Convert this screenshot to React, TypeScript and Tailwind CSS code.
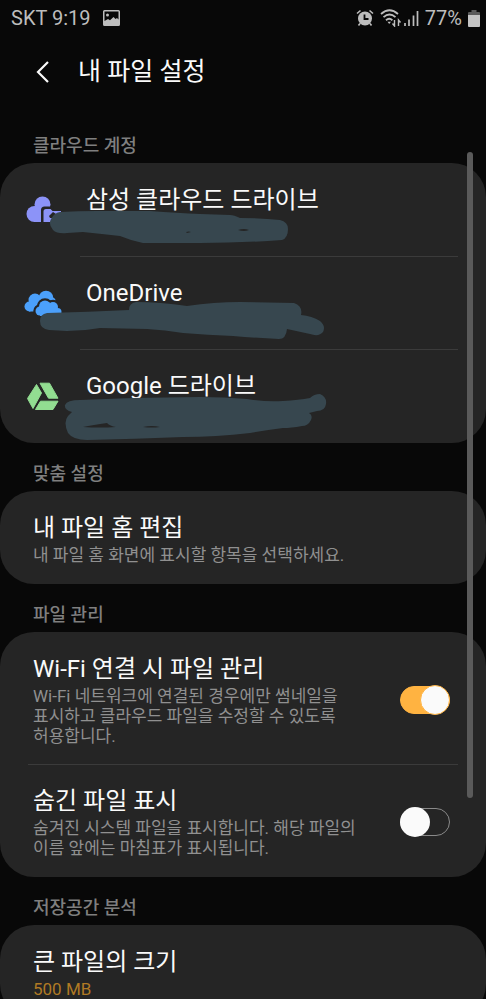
import type React from "react"
import { useState } from "react"

interface AccountRowProps {
  title: string
  icon: React.ReactNode
  scribble: React.ReactNode
}

interface ToggleRowProps {
  id: string
  title: string
  description: string
  checked: boolean
  onChange: (checked: boolean) => void
}

function SamsungCloudIcon() {
  return (
    <svg viewBox="0 0 38 38" className="h-[38px] w-[38px]" aria-hidden="true">
      <g fill="#8c93f8">
        <circle cx="18.5" cy="13.5" r="8" />
        <circle cx="10.5" cy="23" r="8" />
        <path d="M10 16h16.500v15H10z" />
      </g>
      <path d="M17 32V19q0-3.500 3.500-3.500h9V32z" fill="#252525" />
      <path d="M19.500 31V20.500q0-2.500 2.500-2.500h4.500l2 2h8.500v11z" fill="#8c93f8" />
      <path d="M25 25l4-4 3 2v4h-6z" fill="#252525" />
    </svg>
  )
}

function OneDriveIcon() {
  return (
    <svg viewBox="0 0 38 38" className="h-[38px] w-[38px]" aria-hidden="true">
      <g fill="#4ba0fb">
        <circle cx="5.500" cy="22.500" r="5" />
        <circle cx="11" cy="16" r="6.500" />
        <circle cx="22" cy="14" r="7.300" />
        <circle cx="28" cy="17" r="3.500" />
        <path d="M5 16h20v11.500H5z" />
      </g>
      <g fill="#4ba0fb" stroke="#252525" strokeWidth="4.500">
        <circle cx="16" cy="27" r="4.500" />
        <circle cx="21" cy="22.500" r="6" />
        <circle cx="29" cy="23" r="5" />
        <circle cx="33.500" cy="28" r="4" />
      </g>
      <g fill="#4ba0fb">
        <circle cx="16" cy="27" r="4.500" />
        <circle cx="21" cy="22.500" r="6" />
        <circle cx="29" cy="23" r="5" />
        <circle cx="33.500" cy="28" r="4" />
        <path d="M16 22h13l4 6v4H16z" />
      </g>
    </svg>
  )
}

function GoogleDriveIcon() {
  return (
    <svg viewBox="0 0 38 38" className="h-[38px] w-[38px]" aria-hidden="true">
      <g fill="#92dd91" stroke="#92dd91" strokeWidth="1" strokeLinejoin="round">
        <path d="M12.500 7.500l5 8.500-8.500 15.500L3.500 21.500z" />
        <path d="M16 6.200h9.500l8.500 15h-9.500z" />
        <path d="M16.500 24.200H34L29 32.500H11.500z" />
      </g>
    </svg>
  )
}

function StatusBar() {
  return (
    <header className="flex h-9 items-center justify-between pr-1.5 pl-[11px] text-xl leading-6 text-[#bdbdbd]">
      <div className="flex items-center gap-3">
        <span>SKT 9:19</span>
        <svg viewBox="0 0 17 16" className="h-4 w-[17px]" aria-hidden="true">
          <path
            fill="#bdbdbd"
            fillRule="evenodd"
            d="M1.500 0h14Q17 0 17 1.500v13q0 1.500-1.500 1.500h-14Q0 16 0 14.500v-13Q0 0 1.500 0zM1.500 1.500v9.500l3.500-2 2 1.200L10.500 7l2 2 1.500-1 1.500 1.500v-8zM4.500 3.500a1.500 1.500 0 1 1 0 3 1.500 1.500 0 0 1 0-3z"
          />
        </svg>
      </div>
      <div className="flex items-center gap-1.5">
        <svg viewBox="0 0 18 18" className="h-[18px] w-[18px]" aria-hidden="true">
          <path d="M1 4.500L4.500 1.500M17 4.500L13.500 1.500M4 14.500L2.500 16.500M14 14.500L15.500 16.500" stroke="#bdbdbd" strokeWidth="1.600" fill="none" />
          <circle cx="9" cy="9.500" r="7" fill="#bdbdbd" />
          <path d="M8.500 5.500V10h4" stroke="#080808" strokeWidth="1.800" fill="none" />
        </svg>
        <svg viewBox="0 0 22 18" className="h-[18px] w-[22px]" aria-hidden="true">
          <g fill="none" stroke="#bdbdbd" strokeWidth="1.800">
            <path d="M1 5Q9.500-2.500 18 5" />
            <path d="M3.500 8.200q6-5.400 12 0" />
            <path d="M6 11.200q3.200-2.800 6.400 0" />
          </g>
          <path d="M7.500 12.800h3.500L9.200 15z" fill="#bdbdbd" />
          <path d="M14.500 11v6l-2-2.500M18.500 17v-6l2 2.500" fill="none" stroke="#bdbdbd" strokeWidth="1.400" />
        </svg>
        <svg viewBox="0 0 15 16" className="-ml-1 h-4 w-[15px]" aria-hidden="true">
          <path d="M1 13v3M5 9.500V16M9.500 5.500V16M13.500 1v15" stroke="#bdbdbd" strokeWidth="1.700" />
        </svg>
        <span>77%</span>
        <svg viewBox="0 0 12 17" className="h-[17px] w-3" aria-hidden="true">
          <path d="M3.500 0h5v2H11q1 0 1 1v3H0V3q0-1 1-1h2.500z" fill="#5a5a5a" />
          <path d="M0 5h12v11q0 1-1 1H1q-1 0-1-1z" fill="#c4c4c4" />
        </svg>
      </div>
    </header>
  )
}

function Section({ title, children }: { title: string; children: React.ReactNode }) {
  return (
    <section>
      <h2 className="flex h-12 items-end px-[33px] pb-[5px] text-lg leading-6 font-medium text-[#7f7f7f]">{title}</h2>
      <div className="rounded-[34px] bg-[#252525] py-px">{children}</div>
    </section>
  )
}

function AccountRow({ title, icon, scribble }: AccountRowProps) {
  return (
    <button type="button" className="relative flex w-full items-center gap-6 py-5 pr-7 pl-6 text-left">
      {icon}
      <span className="block pb-5 text-2xl leading-8 text-[#fafafa]">{title}</span>
      <svg viewBox="0 0 340 93" className="absolute -top-px left-0 h-[93px] w-[340px]" fill="#37474f" aria-hidden="true">
        {scribble}
      </svg>
    </button>
  )
}

function ToggleRow({ id, title, description, checked, onChange }: ToggleRowProps) {
  return (
    <div className="flex items-center gap-10 pt-5 pr-9 pb-[18px] pl-[33px]">
      <label htmlFor={id} className="flex-1 break-keep">
        <span className="block text-2xl leading-[33px] text-[#fafafa]">{title}</span>
        <span className="block text-[17px] leading-5 text-[#909090]">{description}</span>
      </label>
      <input
        id={id}
        type="checkbox"
        role="switch"
        checked={checked}
        onChange={(e) => onChange(e.target.checked)}
        className="flex h-7 w-[50px] shrink-0 appearance-none items-center rounded-full border border-[#8a8a8a] before:-ml-px before:h-[30px] before:w-[30px] before:rounded-full before:bg-[#fafafa] checked:justify-end checked:border-[#ffb341] checked:bg-[#ffb341] checked:before:-mr-px checked:before:border checked:before:border-[#ffb341]"
      />
    </div>
  )
}

export default function App() {
  const [wifiOnly, setWifiOnly] = useState(true)
  const [showHidden, setShowHidden] = useState(false)

  return (
    <div className="relative flex h-screen flex-col overflow-hidden bg-[#080808] font-[Roboto,'Noto_Sans_CJK_KR',sans-serif]">
      <StatusBar />
      <div className="flex h-[71px] shrink-0 items-center gap-7 pl-9">
        <button type="button" aria-label="뒤로">
          <svg viewBox="0 0 14 22" className="h-[22px] w-3.5" aria-hidden="true">
            <path d="M12 1L2 11l10 10" fill="none" stroke="#fafafa" strokeWidth="2.200" />
          </svg>
        </button>
        <h1 className="text-[25px] leading-8 text-[#fafafa]">내 파일 설정</h1>
      </div>

      <main className="min-h-0 flex-1 overflow-hidden pt-2">
        <Section title="클라우드 계정">
          <AccountRow
            title="삼성 클라우드 드라이브"
            icon={<SamsungCloudIcon />}
            scribble={
              <>
                <path d="M60 49Q78 48 97 48Q124 48 150 48Q178 50 200 51L230 52Q234 52 240 55Q262 55 280 57Q288 59 288 66Q288 75 282 77Q240 80 200 80L143 80Q132 78 120 73Q102 71 83 69L67 70Q57 71 53 67Q48 61 51 56Q54 50 60 49z" />
                <path d="M238 67q6-2 11 0q-5 2-11 0zM186 69q3-1 5 0l-4 1z" fill="#252525" />
              </>
            }
          />
          <div className="mr-7 ml-20 h-px bg-[#3b3b3b]" />
          <AccountRow
            title="OneDrive"
            icon={<OneDriveIcon />}
            scribble={
              <path d="M47 57Q88 56 129 54Q129 47 136 46Q160 46 187 50Q214 46 240 46L294 47Q303 50 301 59Q312 60 320 65Q326 70 323 76Q319 81 310 78L287 73Q286 83 279 83Q256 82 233 80Q208 79 183 77Q165 74 147 73L100 72Q84 75 67 75L49 74Q40 73 40 65Q40 58 47 57z" />
            }
          />
          <div className="mr-7 ml-20 h-px bg-[#3b3b3b]" />
          <AccountRow
            title="Google 드라이브"
            icon={<GoogleDriveIcon />}
            scribble={
              <>
                <path d="M65 56Q67 51 80 51Q106 50 133 49L200 48Q224 48 247 50Q265 53 283 52Q299 51 310 49Q314 45 320 45Q327 48 326 55Q325 62 317 62L309 64Q313 66 311 71Q308 77 302 77Q291 79 283 79Q266 81 250 84Q216 88 183 88Q135 90 87 91Q73 91 68 84Q63 73 68 67L72 63Q64 61 65 56z" />
                <path d="M83 78q10-2 24-4q3 3 9 4q-16 1-33 0zM143 78q9-2 17 0q-8 1-17 0z" fill="#252525" />
              </>
            }
          />
        </Section>

        <Section title="맞춤 설정">
          <button type="button" className="block w-full px-[33px] pt-5 pb-[18px] text-left">
            <span className="block text-2xl leading-[33px] text-[#fafafa]">내 파일 홈 편집</span>
            <span className="block text-[17px] leading-5 text-[#909090]">내 파일 홈 화면에 표시할 항목을 선택하세요.</span>
          </button>
        </Section>

        <Section title="파일 관리">
          <ToggleRow
            id="wifi-only"
            title="Wi-Fi 연결 시 파일 관리"
            description="Wi-Fi 네트워크에 연결된 경우에만 썸네일을 표시하고 클라우드 파일을 수정할 수 있도록 허용합니다."
            checked={wifiOnly}
            onChange={setWifiOnly}
          />
          <div className="mx-7 h-px bg-[#3b3b3b]" />
          <ToggleRow
            id="show-hidden"
            title="숨긴 파일 표시"
            description="숨겨진 시스템 파일을 표시합니다. 해당 파일의 이름 앞에는 마침표가 표시됩니다."
            checked={showHidden}
            onChange={setShowHidden}
          />
        </Section>

        <Section title="저장공간 분석">
          <button type="button" className="block w-full px-[33px] pt-5 pb-[18px] text-left">
            <span className="block text-2xl leading-[33px] text-[#fafafa]">큰 파일의 크기</span>
            <span className="block text-[17px] leading-5 text-[#b07a24]">500 MB</span>
          </button>
        </Section>
      </main>

      {/* scroll thumb */}
      <div className="absolute top-[152px] right-[13px] h-[646px] w-[6px] rounded-full bg-[#5a5a5a]" />
    </div>
  )
}
